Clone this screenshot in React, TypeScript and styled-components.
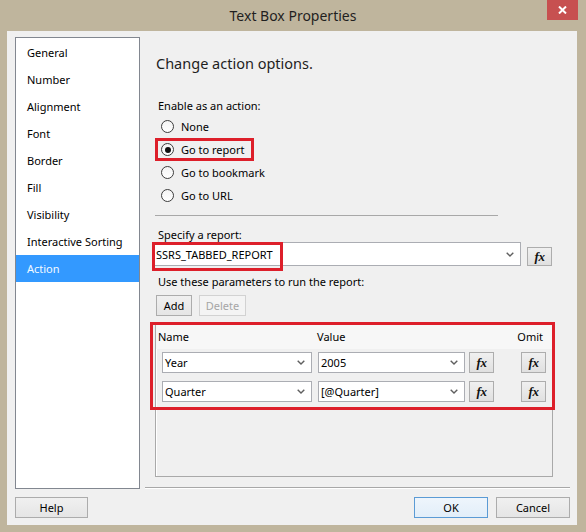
import React from 'react'
import styled, { createGlobalStyle, css } from 'styled-components'

const GlobalStyle = createGlobalStyle`
  html, body {
    margin: 0;
    padding: 0;
    background: #bfb59d;
  }
  body {
    font-family: 'Noto Sans', 'Open Sans', sans-serif;
    color: #000;
  }
`

const Frame = styled.div`
  width: 586px;
  height: 532px;
  display: flex;
  flex-direction: column;
  background: #bfb59d;
  overflow: hidden;
`

const TitleBar = styled.div`
  height: 31px;
  flex: none;
  display: grid;
  grid-template-columns: 1fr auto 1fr;
  align-items: start;
`

const Title = styled.div`
  grid-column: 2;
  line-height: 31px;
  font-size: 14px;
  color: #1f1f1f;
`

const CloseButton = styled.div`
  grid-column: 3;
  justify-self: end;
  margin-right: 8px;
  width: 31px;
  height: 20px;
  background: #c75050;
  display: flex;
  align-items: center;
  justify-content: center;
`

const Client = styled.div`
  flex: 1;
  margin: 0 9px 7px 7px;
  padding: 6px 7px 7px 8px;
  background: #f0f0f0;
  display: grid;
  grid-template-columns: 125px 1fr;
  grid-template-rows: 452px auto;
  row-gap: 8px;
`

const Sidebar = styled.ul`
  margin: 0;
  padding: 1px 0 0;
  list-style: none;
  box-sizing: border-box;
  border: 1px solid #828790;
  background: #fff;
`

const NavItem = styled.li<{ $active?: boolean }>`
  height: 27px;
  line-height: 27px;
  padding-left: 11px;
  font-size: 11px;
  color: ${p => (p.$active ? '#f4f9ff' : '#000')};
  background: ${p => (p.$active ? '#3399ff' : 'transparent')};
`

const Main = styled.div`
  display: flex;
  flex-direction: column;
  padding-left: 13px;
  min-width: 0;
`

const Heading = styled.div`
  margin: 16px 0 0 3px;
  font-size: 14.5px;
  line-height: 20px;
  color: #1e1e1e;
`

const FieldLabel = styled.div<{ $top: number }>`
  margin: ${p => p.$top}px 0 0 5px;
  font-size: 11px;
  line-height: 14px;
`

const RadioGroup = styled.div`
  margin-top: 2px;
  display: flex;
  flex-direction: column;
`

const RadioRow = styled.label<{ $marked?: boolean }>`
  display: flex;
  align-items: center;
  width: fit-content;
  height: 23px;
  box-sizing: border-box;
  margin-left: 2px;
  padding: 0 10px 0 6px;
  font-size: 11px;
  ${p =>
    p.$marked &&
    css`
      outline: 3px solid #dd1f2a;
      outline-offset: -3px;
    `}
`

const RadioDot = styled.span<{ $checked?: boolean }>`
  width: 13px;
  height: 13px;
  box-sizing: border-box;
  border-radius: 50%;
  border: 1px solid #3d3d3d;
  background: linear-gradient(#f4f4f4, #ffffff);
  display: flex;
  align-items: center;
  justify-content: center;
  margin-right: 7px;

  &::after {
    content: '';
    width: 6px;
    height: 6px;
    border-radius: 50%;
    background: ${p => (p.$checked ? '#111' : 'transparent')};
  }
`

const Rule = styled.div`
  margin: 8px 0 0 2px;
  width: 343px;
  height: 1px;
  background: #a8a8a8;
`

const ReportRow = styled.div`
  display: flex;
  align-items: flex-end;
  gap: 6px;
`

const Combo = styled.div<{ $width: number; $height: number }>`
  position: relative;
  width: ${p => p.$width}px;
  height: ${p => p.$height}px;
  box-sizing: border-box;
  border: 1px solid #abadb3;
  background: #fff;
  display: flex;
  align-items: center;
  padding: 0 6px 0 2px;
  font-size: 11px;
`

const ComboText = styled.span`
  flex: 1;
  white-space: nowrap;
`

const Callout = styled.span<{ $left: number; $top: number; $width: number; $height: number }>`
  position: absolute;
  left: ${p => p.$left}px;
  top: ${p => p.$top}px;
  width: ${p => p.$width}px;
  height: ${p => p.$height}px;
  box-sizing: border-box;
  border: 3px solid #dd1f2a;
  pointer-events: none;
`

const FxButton = styled.div<{ $height: number }>`
  width: 25px;
  height: ${p => p.$height}px;
  box-sizing: border-box;
  border: 1px solid #adadad;
  background: linear-gradient(#f0f0f0, #e0e0e0);
  display: flex;
  align-items: center;
  justify-content: center;
  font-family: 'Liberation Serif', 'DejaVu Serif', serif;
  font-style: italic;
  font-weight: bold;
  font-size: 13px;
  color: #111;
  letter-spacing: -0.5px;
`

const ButtonRow = styled.div`
  margin: 6px 0 0 3px;
  display: flex;
  gap: 7px;
`

const PushButton = styled.button<{ $width: number; $primary?: boolean }>`
  width: ${p => p.$width}px;
  height: 21px;
  box-sizing: border-box;
  padding: 0;
  border: 1px solid #acacac;
  background: linear-gradient(#f0f0f0, #e5e5e5);
  font-family: 'Noto Sans', 'Open Sans', sans-serif;
  font-size: 11px;
  color: #000;

  &:disabled {
    color: #a6a6a6;
    border-color: #d2d2d2;
    background: #f4f4f4;
  }

  ${p =>
    p.$primary &&
    css`
      border-color: #5b9bd5;
      background: linear-gradient(#eef5fc, #e2eef9);
    `}
`

const ParamFrame = styled.div`
  position: relative;
  margin: 6px 0 0 2px;
  width: 398px;
  height: 155px;
  box-sizing: border-box;
  border: 1px solid #a9a9a9;
  box-shadow: inset 1px 1px 0 #fff;
`

const ParamHeader = styled.div`
  display: grid;
  grid-template-columns: 159px 197px 1fr;
  height: 26px;
  align-items: center;
  padding: 0 9px 0 2px;
  background: #f7f7f7;
  font-size: 11px;
`

const OmitHead = styled.span`
  justify-self: end;
`

const ParamRows = styled.div`
  display: grid;
  grid-template-columns: 156px 151px 25px 1fr;
  row-gap: 8px;
  padding: 3px 6px 0;
`

const OmitCell = styled.div`
  justify-self: end;
`

const BottomRule = styled.div`
  margin: auto 0 1px -8px;
  height: 1px;
  background: #a8a8a8;
  box-shadow: 0 1px 0 #fff;
`

const Footer = styled.div`
  grid-column: 2;
  justify-self: end;
  display: flex;
  gap: 8px;
`

const Chevron = () => (
  <svg width="8" height="5" viewBox="0 0 8 5">
    <polyline points="0.7,0.7 4,4 7.3,0.7" fill="none" stroke="#5f5f5f" strokeWidth="1.4" />
  </svg>
)

const CloseGlyph = () => (
  <svg width="9" height="8" viewBox="0 0 9 8">
    <path d="M1 0.5 L8 7.5 M8 0.5 L1 7.5" stroke="#fff" strokeWidth="2" />
  </svg>
)

const pages = [
  'General',
  'Number',
  'Alignment',
  'Font',
  'Border',
  'Fill',
  'Visibility',
  'Interactive Sorting',
  'Action',
]

const actions = ['None', 'Go to report', 'Go to bookmark', 'Go to URL']

const params = [
  { name: 'Year', value: '2005' },
  { name: 'Quarter', value: '[@Quarter]' },
]

export default function App() {
  return (
    <>
      <GlobalStyle />
      <Frame>
        <TitleBar>
          <Title>Text Box Properties</Title>
          <CloseButton>
            <CloseGlyph />
          </CloseButton>
        </TitleBar>

        <Client>
          <Sidebar>
            {pages.map(p => (
              <NavItem key={p} $active={p === 'Action'}>
                {p}
              </NavItem>
            ))}
          </Sidebar>

          <Main>
            <Heading>Change action options.</Heading>

            <FieldLabel $top={26}>Enable as an action:</FieldLabel>
            <RadioGroup>
              {actions.map(a => (
                <RadioRow key={a} $marked={a === 'Go to report'}>
                  <RadioDot $checked={a === 'Go to report'} />
                  {a}
                </RadioRow>
              ))}
            </RadioGroup>

            <Rule />

            <FieldLabel $top={12}>Specify a report:</FieldLabel>
            <ReportRow>
              <Combo $width={368} $height={24}>
                <ComboText>SSRS_TABBED_REPORT</ComboText>
                <Chevron />
                <Callout $left={-2} $top={-1} $width={131} $height={29} />
              </Combo>
              <FxButton $height={19}>fx</FxButton>
            </ReportRow>

            <FieldLabel $top={9}>Use these parameters to run the report:</FieldLabel>
            <ButtonRow>
              <PushButton $width={36}>Add</PushButton>
              <PushButton $width={47} disabled>
                Delete
              </PushButton>
            </ButtonRow>

            <ParamFrame>
              <ParamHeader>
                <span>Name</span>
                <span>Value</span>
                <OmitHead>Omit</OmitHead>
              </ParamHeader>
              <ParamRows>
                {params.map(r => (
                  <React.Fragment key={r.name}>
                    <Combo $width={150} $height={21}>
                      <ComboText>{r.name}</ComboText>
                      <Chevron />
                    </Combo>
                    <Combo $width={147} $height={21}>
                      <ComboText>{r.value}</ComboText>
                      <Chevron />
                    </Combo>
                    <FxButton $height={21}>fx</FxButton>
                    <OmitCell>
                      <FxButton $height={21}>fx</FxButton>
                    </OmitCell>
                  </React.Fragment>
                ))}
              </ParamRows>
              <Callout $left={-6} $top={-1} $width={405} $height={88} />
            </ParamFrame>

            <BottomRule />
          </Main>

          <PushButton $width={73}>Help</PushButton>
          <Footer>
            <PushButton $width={74} $primary>
              OK
            </PushButton>
            <PushButton $width={74}>Cancel</PushButton>
          </Footer>
        </Client>
      </Frame>
    </>
  )
}
